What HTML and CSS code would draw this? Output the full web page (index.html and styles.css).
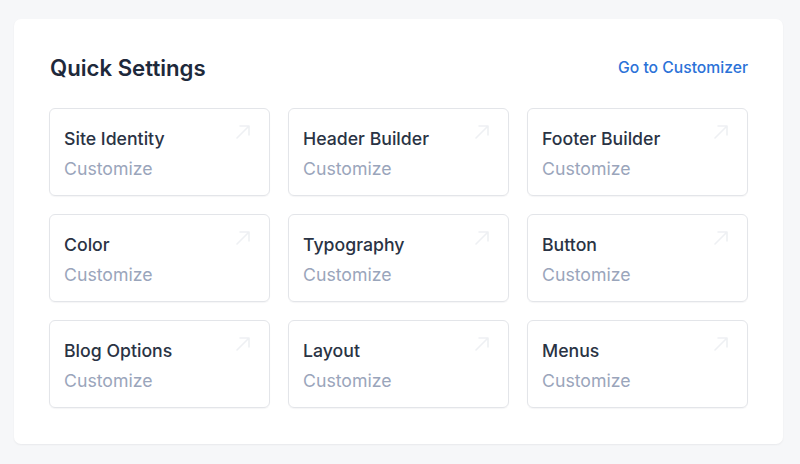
FILE: index.html
```html
<!DOCTYPE html>
<html>
<head>
<meta charset="utf-8">
<link rel="stylesheet" href="styles.css">
</head>
<body>
<section class="panel">
  <div class="panel-head">
    <h2 class="panel-title">Quick Settings</h2>
    <a class="panel-link" href="#">Go to Customizer</a>
  </div>
  <div class="grid">
    <div class="tile"><div class="tile-title">Site Identity</div><div class="tile-sub">Customize</div><svg class="tile-icon" viewBox="0 0 18 18"><path d="M3 15L15 3M6 3h9v9"/></svg></div>
    <div class="tile"><div class="tile-title">Header Builder</div><div class="tile-sub">Customize</div><svg class="tile-icon" viewBox="0 0 18 18"><path d="M3 15L15 3M6 3h9v9"/></svg></div>
    <div class="tile"><div class="tile-title">Footer Builder</div><div class="tile-sub">Customize</div><svg class="tile-icon" viewBox="0 0 18 18"><path d="M3 15L15 3M6 3h9v9"/></svg></div>
    <div class="tile"><div class="tile-title">Color</div><div class="tile-sub">Customize</div><svg class="tile-icon" viewBox="0 0 18 18"><path d="M3 15L15 3M6 3h9v9"/></svg></div>
    <div class="tile"><div class="tile-title">Typography</div><div class="tile-sub">Customize</div><svg class="tile-icon" viewBox="0 0 18 18"><path d="M3 15L15 3M6 3h9v9"/></svg></div>
    <div class="tile"><div class="tile-title">Button</div><div class="tile-sub">Customize</div><svg class="tile-icon" viewBox="0 0 18 18"><path d="M3 15L15 3M6 3h9v9"/></svg></div>
    <div class="tile"><div class="tile-title">Blog Options</div><div class="tile-sub">Customize</div><svg class="tile-icon" viewBox="0 0 18 18"><path d="M3 15L15 3M6 3h9v9"/></svg></div>
    <div class="tile"><div class="tile-title">Layout</div><div class="tile-sub">Customize</div><svg class="tile-icon" viewBox="0 0 18 18"><path d="M3 15L15 3M6 3h9v9"/></svg></div>
    <div class="tile"><div class="tile-title">Menus</div><div class="tile-sub">Customize</div><svg class="tile-icon" viewBox="0 0 18 18"><path d="M3 15L15 3M6 3h9v9"/></svg></div>
  </div>
</section>
</body>
</html>
```

FILE: styles.css
```css
* { box-sizing: border-box; }
html, body { margin: 0; padding: 0; }
body {
  background: #f6f7f9;
  font-family: Inter, "Noto Sans", sans-serif;
  width: 800px;
  height: 464px;
  overflow: hidden;
  padding-top: 19px;
  padding-left: 14px;
}
.panel {
  width: 769px;
  background: #ffffff;
  border-radius: 7px;
  box-shadow: 0 1px 2px rgba(15, 23, 42, 0.06);
  padding: 35px 35px 36px 35px;
}
.panel-head {
  display: flex;
  justify-content: space-between;
  align-items: center;
  height: 28px;
  margin-bottom: 26px;
  padding-left: 1px;
}
.panel-title {
  margin: 0;
  font-size: 22.2px;
  font-weight: 600;
  color: #1e293b;
  line-height: 28px;
}
.panel-link {
  font-size: 15.7px;
  font-weight: 500;
  color: #2b72d8;
  text-decoration: none;
  line-height: 28px;
}
.grid {
  display: grid;
  grid-template-columns: repeat(3, 221px);
  column-gap: 18px;
  row-gap: 18px;
  grid-auto-rows: 88px;
}
.tile {
  position: relative;
  border: 1px solid #e3e5e9;
  border-radius: 6px;
  box-shadow: 0 1px 1px rgba(15, 23, 42, 0.04);
  padding: 18px 14px 14px 14px;
}
.tile-title {
  font-size: 17.7px;
  font-weight: 500;
  line-height: 24px;
  color: #2a3344;
}
.tile-sub {
  margin-top: 6px;
  font-size: 17.7px;
  font-weight: 400;
  line-height: 24px;
  color: #9aa5bb;
}
.tile-icon {
  position: absolute;
  top: 14px;
  right: 17px;
  width: 18px;
  height: 18px;
  fill: none;
  stroke: #eef0f3;
  stroke-width: 1.6;
  stroke-linecap: round;
  stroke-linejoin: round;
}
```
